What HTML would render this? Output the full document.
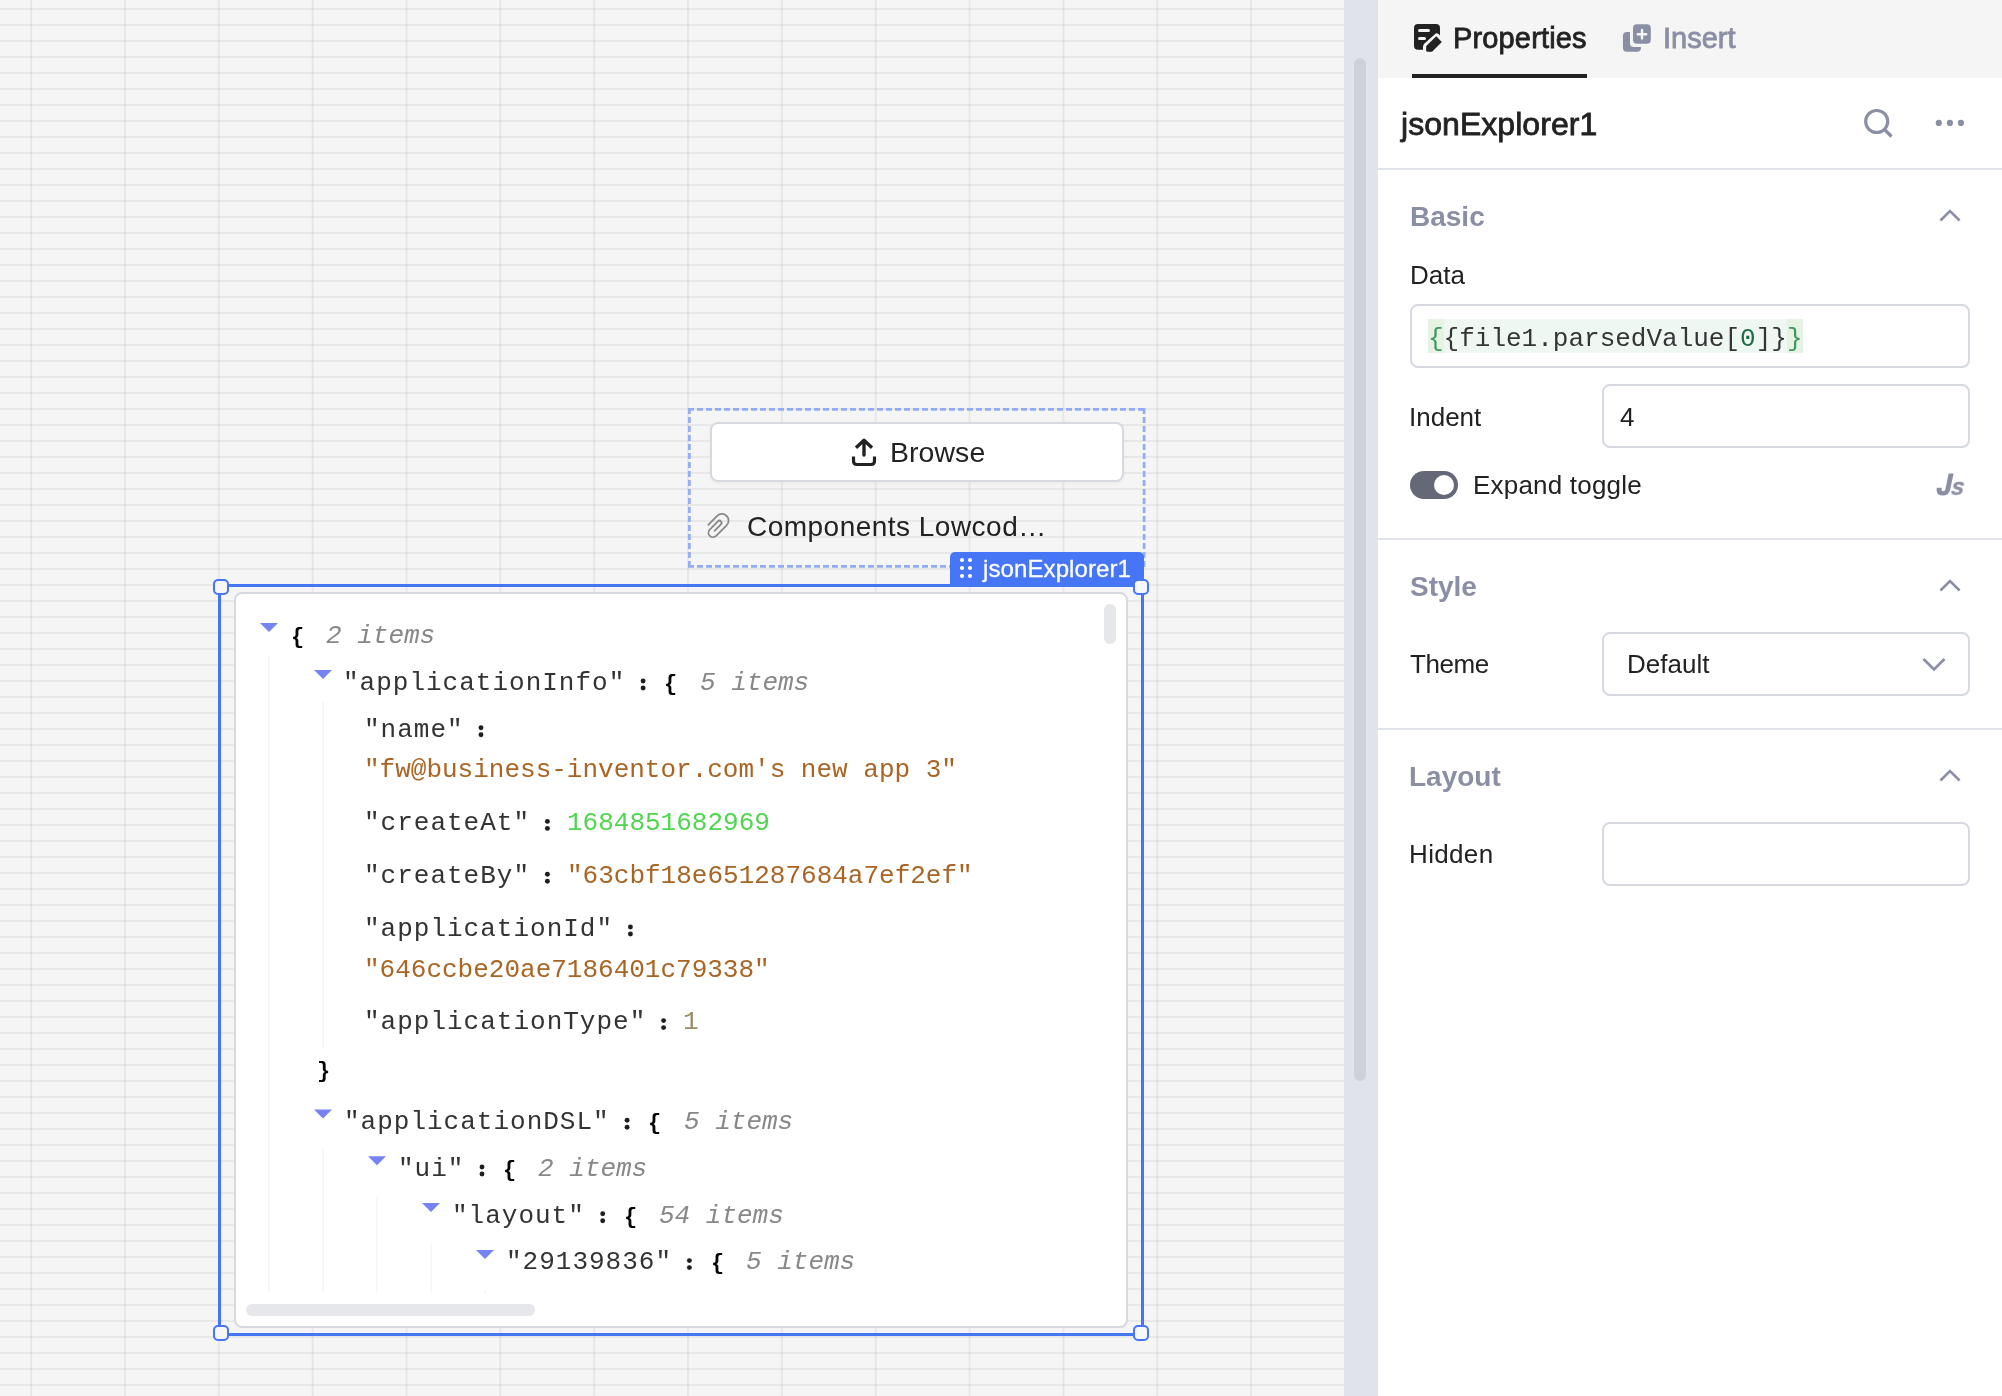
<!DOCTYPE html>
<html><head><meta charset="utf-8">
<style>
html,body{margin:0;padding:0;}
body{width:2002px;height:1396px;overflow:hidden;position:relative;background:#f5f5f5;font-family:'Liberation Sans', sans-serif;}
.b{position:absolute;}
.t{position:absolute;white-space:pre;line-height:1;will-change:transform;}
.ov{position:absolute;left:0;top:0;pointer-events:none;}
#grid{background-color:#f5f5f5;
 background-image:linear-gradient(to bottom, transparent 8px, rgba(0,0,0,0.055) 8px, rgba(0,0,0,0.055) 10px, transparent 10px),
 linear-gradient(to right, transparent 30px, rgba(0,0,0,0.06) 30px, rgba(0,0,0,0.06) 32px, transparent 32px);
 background-size:100% 16px, 93.846px 100%;
 background-position:0 0, 0.2px 0;}
</style></head><body>
<div class="b" id="grid" style="left:0;top:0;width:1344px;height:1396px;"></div>
<div class="b" style="left:1344px;top:0px;width:34px;height:1396px;background:#e1e3ea;"></div>
<div class="b" style="left:1354px;top:58px;width:12px;height:1023px;background:#ced1d9;border-radius:6px;"></div>
<div class="b" style="left:1378px;top:0px;width:624px;height:1396px;background:#fff;"></div>
<div class="b" style="left:1378px;top:0px;width:624px;height:78px;background:#f5f5f5;"></div>
<div class="b" style="left:1412px;top:74px;width:175px;height:4px;background:#222;"></div>
<div class="b" style="left:1378px;top:168px;width:624px;height:2px;background:#e1e3eb;"></div>
<div class="b" style="left:1378px;top:538px;width:624px;height:2px;background:#e1e3eb;"></div>
<div class="b" style="left:1378px;top:728px;width:624px;height:2px;background:#e1e3eb;"></div>
<div class="b" style="left:1410px;top:304px;width:560px;height:64px;border:2px solid #d7d9e0;border-radius:8px;box-sizing:border-box;background:#fff;"></div>
<div class="b" style="left:1428px;top:319px;width:375px;height:34px;background:#eff7f3;"></div>
<div class="b" style="left:1428px;top:319px;width:15.599999999999909px;height:34px;background:#e6f2e3;"></div>
<div class="b" style="left:1787.4px;top:319px;width:15.599999999999909px;height:34px;background:#e6f2e3;"></div>
<div class="b" style="left:1602px;top:384px;width:368px;height:64px;border:2px solid #d7d9e0;border-radius:8px;box-sizing:border-box;background:#fff;"></div>
<div class="b" style="left:1602px;top:632px;width:368px;height:64px;border:2px solid #d7d9e0;border-radius:8px;box-sizing:border-box;background:#fff;"></div>
<div class="b" style="left:1602px;top:822px;width:368px;height:64px;border:2px solid #d7d9e0;border-radius:8px;box-sizing:border-box;background:#fff;"></div>
<div class="b" style="left:1410px;top:471px;width:48px;height:28px;background:#646877;border-radius:14px;"></div>
<div class="b" style="left:1434px;top:475px;width:20px;height:20px;background:#fff;border-radius:10px;"></div>
<svg class="ov" width="2002" height="1396"><g stroke="#93adf4" stroke-width="2.75" stroke-dasharray="6 3" fill="none"><path d="M688,409.4 H1145.5"/><path d="M688,566.4 H1145.5"/><path d="M689.4,408 V567.8"/><path d="M1144.1,408 V567.8"/></g></svg>
<div class="b" style="left:710px;top:422px;width:414px;height:60px;border:2px solid #d7d9e0;border-radius:8px;box-sizing:border-box;background:#fff;box-shadow:0 2px 4px rgba(0,0,0,0.035);"></div>
<div class="b" style="left:234px;top:592px;width:894px;height:736px;border:2px solid #d7d9e0;border-radius:8px;box-sizing:border-box;background:#fff;"></div>
<div class="b" style="left:1104px;top:604px;width:12px;height:40px;background:#e6e7eb;border-radius:6px;"></div>
<div class="b" style="left:246px;top:1304px;width:289px;height:12px;background:#e6e7eb;border-radius:6px;"></div>
<div class="b" style="left:268px;top:655px;width:2px;height:638px;background:#f4f9f5;"></div>
<div class="b" style="left:322px;top:702px;width:2px;height:346px;background:#f4f9f5;"></div>
<div class="b" style="left:322px;top:1149px;width:2px;height:144px;background:#f4f9f5;"></div>
<div class="b" style="left:376px;top:1196px;width:2px;height:97px;background:#f4f9f5;"></div>
<div class="b" style="left:430px;top:1243px;width:2px;height:50px;background:#f4f9f5;"></div>
<div class="b" style="left:484px;top:1290px;width:2px;height:3px;background:#f4f9f5;"></div>
<div class="b" style="left:218px;top:584px;width:3px;height:752px;background:#4676f5;"></div>
<div class="b" style="left:1141px;top:584px;width:3px;height:752px;background:#4676f5;"></div>
<div class="b" style="left:219px;top:584px;width:925px;height:3px;background:#4676f5;"></div>
<div class="b" style="left:219px;top:1333px;width:925px;height:3px;background:#4676f5;"></div>
<div class="b" style="left:950px;top:552px;width:194px;height:35px;background:#4676f5;border-radius:5px 5px 0 0;"></div>
<div class="b" style="left:213px;top:579px;width:16px;height:16px;background:#f7f7f7;border:2.5px solid #4676f5;border-radius:5px;box-sizing:border-box;"></div>
<div class="b" style="left:1133px;top:579px;width:16px;height:16px;background:#f7f7f7;border:2.5px solid #4676f5;border-radius:5px;box-sizing:border-box;"></div>
<div class="b" style="left:213px;top:1325px;width:16px;height:16px;background:#f7f7f7;border:2.5px solid #4676f5;border-radius:5px;box-sizing:border-box;"></div>
<div class="b" style="left:1133px;top:1325px;width:16px;height:16px;background:#f7f7f7;border:2.5px solid #4676f5;border-radius:5px;box-sizing:border-box;"></div>
<svg class="ov" width="2002" height="1396" viewBox="0 0 2002 1396"><path d="M1418,24 H1436 Q1440,24 1440,28 V35.6 Q1438.2,33 1436,33.2 L1424.2,43.8 Q1423,45 1423,47.3 V49.8 H1418 Q1414,49.8 1414,45.8 V28 Q1414,24 1418,24 Z" fill="#222"/><rect x="1418" y="29" width="12" height="3" rx="1.5" fill="#f5f5f5"/><rect x="1418" y="37" width="8" height="3" rx="1.5" fill="#f5f5f5"/><path d="M1436.3,36.3 L1441.8,42.1 L1432.1,51.8 H1427.6 Q1426.2,51.8 1426.2,50.4 V46 Z" fill="#222"/><rect x="1633" y="24.2" width="17.8" height="19.5" rx="4" fill="#8b8fa3"/><path d="M1642,30 V38.4 M1637.8,34.2 H1646.2" stroke="#f5f5f5" stroke-width="2.4" stroke-linecap="round"/><path d="M1630,31.9 H1627 Q1622.9,31.9 1622.9,36 V47.7 Q1622.9,51.8 1627,51.8 H1637 Q1641,51.8 1641,47.7 V46.9 H1634 Q1630,46.9 1630,42.9 Z" fill="#8b8fa3"/><circle cx="1876.7" cy="121.5" r="11" fill="none" stroke="#8b8fa3" stroke-width="3.2"/><path d="M1884.5,129.5 L1891.5,136.5" stroke="#8b8fa3" stroke-width="3.2" stroke-linecap="butt"/><circle cx="1938.8" cy="122.9" r="3.1" fill="#8b8fa3"/><circle cx="1949.9" cy="122.9" r="3.1" fill="#8b8fa3"/><circle cx="1960.9" cy="122.9" r="3.1" fill="#8b8fa3"/><path d="M1940.4,220.5 L1950,211 L1959.6,220.5" fill="none" stroke="#8b8fa3" stroke-width="2.6"/><path d="M1940.4,590.5 L1950,581 L1959.6,590.5" fill="none" stroke="#8b8fa3" stroke-width="2.6"/><path d="M1940.4,780.5 L1950,771 L1959.6,780.5" fill="none" stroke="#8b8fa3" stroke-width="2.6"/><path d="M1923.5,659 L1934,669.5 L1944.5,659" fill="none" stroke="#8b8fa3" stroke-width="2.6"/><path d="M1948.6,473.5 H1953.6 L1950.2,489.5 Q1948.9,495.6 1942.8,495.6 Q1936.4,495.6 1936.6,489.4 L1936.8,487.8 H1941.6 L1941.5,489 Q1941.4,491.3 1943.3,491.3 Q1945,491.3 1945.5,489 Z" fill="#8b8fa3"/><path d="M856,447.8 L864,440.3 L872,447.8" fill="none" stroke="#222" stroke-width="3.3" stroke-linejoin="round"/><path d="M864,442 V455" fill="none" stroke="#222" stroke-width="3.4" stroke-linecap="round"/><path d="M853.5,456.5 V461 Q853.5,464.5 857,464.5 H871 Q874.5,464.5 874.5,461 V456.5" fill="none" stroke="#222" stroke-width="3.2"/><path d="M708.3,524.8 L717.16,515.86 A6.7,6.7 0 0 1 726.64,525.34 L716.08,535.88 A4.5,4.5 0 0 1 709.72,529.52 L717.89,521.29 A2.13,2.13 0 0 1 720.91,524.31 L714.6,530.8" fill="none" stroke="#888" stroke-width="1.8" stroke-linecap="round"/><circle cx="962" cy="560" r="2.1" fill="#fff"/><circle cx="962" cy="568" r="2.1" fill="#fff"/><circle cx="962" cy="576" r="2.1" fill="#fff"/><circle cx="970" cy="560" r="2.1" fill="#fff"/><circle cx="970" cy="568" r="2.1" fill="#fff"/><circle cx="970" cy="576" r="2.1" fill="#fff"/><path d="M260,623 H278 L269,632 Z" fill="#7782f3"/><path d="M314,670 H332 L323,679 Z" fill="#7782f3"/><path d="M314,1109.5 H332 L323,1118.5 Z" fill="#7782f3"/><path d="M368,1156.3 H386 L377,1165.3 Z" fill="#7782f3"/><path d="M422,1203 H440 L431,1212 Z" fill="#7782f3"/><path d="M476,1250 H494 L485,1259 Z" fill="#7782f3"/></svg>
<div class="t" style="left:1452.80px;top:24.00px;font-family:'Liberation Sans', sans-serif;font-size:29px;color:#222;font-weight:normal;font-style:normal;letter-spacing:0.15px;-webkit-text-stroke:0.8px currentColor;">Properties</div>
<div class="t" style="left:1662.63px;top:24.00px;font-family:'Liberation Sans', sans-serif;font-size:29px;color:#8b8fa3;font-weight:normal;font-style:normal;letter-spacing:0.0px;-webkit-text-stroke:0.8px currentColor;">Insert</div>
<div class="t" style="left:1401.40px;top:108.00px;font-family:'Liberation Sans', sans-serif;font-size:32px;color:#222;font-weight:normal;font-style:normal;letter-spacing:0.05px;-webkit-text-stroke:0.8px currentColor;">jsonExplorer1</div>
<div class="t" style="left:1409.93px;top:203.00px;font-family:'Liberation Sans', sans-serif;font-size:28px;color:#8b8fa3;font-weight:bold;font-style:normal;letter-spacing:0px;">Basic</div>
<div class="t" style="left:1409.67px;top:262.00px;font-family:'Liberation Sans', sans-serif;font-size:26px;color:#222;font-weight:normal;font-style:normal;letter-spacing:0px;">Data</div>
<div class="t" style="left:1428.00px;top:326.00px;font-family:'Liberation Mono', monospace;font-size:26px;color:#353535;font-weight:normal;font-style:normal;letter-spacing:0px;"><span style="color:#3c9a5c">{</span>{file1.parsedValue[<span style="color:#1f6b45">0</span>]}<span style="color:#3c9a5c">}</span></div>
<div class="t" style="left:1408.60px;top:404.00px;font-family:'Liberation Sans', sans-serif;font-size:26px;color:#222;font-weight:normal;font-style:normal;letter-spacing:0px;">Indent</div>
<div class="t" style="left:1620.40px;top:404.00px;font-family:'Liberation Sans', sans-serif;font-size:26px;color:#222;font-weight:normal;font-style:normal;letter-spacing:0px;">4</div>
<div class="t" style="left:1473.17px;top:472.00px;font-family:'Liberation Sans', sans-serif;font-size:26px;color:#222;font-weight:normal;font-style:normal;letter-spacing:0.2px;">Expand toggle</div>
<div class="t" style="left:1950.30px;top:476.00px;font-family:'Liberation Sans', sans-serif;font-size:23px;color:#8b8fa3;font-weight:bold;font-style:italic;letter-spacing:0px;transform:skewX(-8deg);transform-origin:0 100%;-webkit-text-stroke:0.4px #8b8fa3;">s</div>
<div class="t" style="left:1409.89px;top:573.00px;font-family:'Liberation Sans', sans-serif;font-size:28px;color:#8b8fa3;font-weight:bold;font-style:normal;letter-spacing:0px;">Style</div>
<div class="t" style="left:1410.10px;top:651.00px;font-family:'Liberation Sans', sans-serif;font-size:26px;color:#222;font-weight:normal;font-style:normal;letter-spacing:-0.4px;">Theme</div>
<div class="t" style="left:1626.87px;top:651.00px;font-family:'Liberation Sans', sans-serif;font-size:26px;color:#222;font-weight:normal;font-style:normal;letter-spacing:0px;">Default</div>
<div class="t" style="left:1409.13px;top:763.00px;font-family:'Liberation Sans', sans-serif;font-size:28px;color:#8b8fa3;font-weight:bold;font-style:normal;letter-spacing:0px;">Layout</div>
<div class="t" style="left:1408.57px;top:841.00px;font-family:'Liberation Sans', sans-serif;font-size:26px;color:#222;font-weight:normal;font-style:normal;letter-spacing:0.35px;">Hidden</div>
<div class="t" style="left:890.00px;top:438.00px;font-family:'Liberation Sans', sans-serif;font-size:28.4px;color:#222;font-weight:normal;font-style:normal;letter-spacing:0.1px;">Browse</div>
<div class="t" style="left:747.33px;top:513.00px;font-family:'Liberation Sans', sans-serif;font-size:28px;color:#222;font-weight:normal;font-style:normal;letter-spacing:0.48px;">Components Lowcod…</div>
<div class="t" style="left:982.90px;top:557.00px;font-family:'Liberation Sans', sans-serif;font-size:24px;color:#fff;font-weight:normal;font-style:normal;letter-spacing:0.1px;-webkit-text-stroke:0.3px #fff;">jsonExplorer1</div>
<div class="t" style="left:290.62px;top:627.00px;font-family:'Liberation Mono', monospace;font-size:22px;color:#060606;font-weight:bold;font-style:normal;letter-spacing:0px;">{</div>
<div class="t" style="left:325.90px;top:623.00px;font-family:'Liberation Mono', monospace;font-size:26px;color:#888888;font-weight:normal;font-style:italic;letter-spacing:0px;">2 items</div>
<div class="t" style="left:343.48px;top:670.00px;font-family:'Liberation Mono', monospace;font-size:26px;color:#333333;font-weight:normal;font-style:normal;letter-spacing:1.0px;">"applicationInfo"</div>
<div class="t" style="left:664.27px;top:674.00px;font-family:'Liberation Mono', monospace;font-size:22px;color:#060606;font-weight:bold;font-style:normal;letter-spacing:0px;">{</div>
<div class="t" style="left:699.55px;top:670.00px;font-family:'Liberation Mono', monospace;font-size:26px;color:#888888;font-weight:normal;font-style:italic;letter-spacing:0px;">5 items</div>
<div class="t" style="left:363.98px;top:717.00px;font-family:'Liberation Mono', monospace;font-size:26px;color:#333333;font-weight:normal;font-style:normal;letter-spacing:1.0px;">"name"</div>
<div class="t" style="left:363.98px;top:757.00px;font-family:'Liberation Mono', monospace;font-size:26px;color:#aa6525;font-weight:normal;font-style:normal;letter-spacing:0px;">"fw@business-inventor.com's new app 3"</div>
<div class="t" style="left:363.98px;top:810.00px;font-family:'Liberation Mono', monospace;font-size:26px;color:#333333;font-weight:normal;font-style:normal;letter-spacing:1.0px;">"createAt"</div>
<div class="t" style="left:566.90px;top:810.00px;font-family:'Liberation Mono', monospace;font-size:26px;color:#4fd64f;font-weight:normal;font-style:normal;letter-spacing:0px;">1684851682969</div>
<div class="t" style="left:363.98px;top:863.00px;font-family:'Liberation Mono', monospace;font-size:26px;color:#333333;font-weight:normal;font-style:normal;letter-spacing:1.0px;">"createBy"</div>
<div class="t" style="left:566.90px;top:863.00px;font-family:'Liberation Mono', monospace;font-size:26px;color:#aa6525;font-weight:normal;font-style:normal;letter-spacing:0px;">"63cbf18e651287684a7ef2ef"</div>
<div class="t" style="left:363.98px;top:916.00px;font-family:'Liberation Mono', monospace;font-size:26px;color:#333333;font-weight:normal;font-style:normal;letter-spacing:1.0px;">"applicationId"</div>
<div class="t" style="left:363.98px;top:957.00px;font-family:'Liberation Mono', monospace;font-size:26px;color:#aa6525;font-weight:normal;font-style:normal;letter-spacing:0px;">"646ccbe20ae7186401c79338"</div>
<div class="t" style="left:363.98px;top:1009.00px;font-family:'Liberation Mono', monospace;font-size:26px;color:#333333;font-weight:normal;font-style:normal;letter-spacing:1.0px;">"applicationType"</div>
<div class="t" style="left:683.10px;top:1009.00px;font-family:'Liberation Mono', monospace;font-size:26px;color:#9d8b63;font-weight:normal;font-style:normal;letter-spacing:0px;">1</div>
<div class="t" style="left:316.77px;top:1061.00px;font-family:'Liberation Mono', monospace;font-size:22px;color:#060606;font-weight:bold;font-style:normal;letter-spacing:0px;">}</div>
<div class="t" style="left:344.08px;top:1109.00px;font-family:'Liberation Mono', monospace;font-size:26px;color:#333333;font-weight:normal;font-style:normal;letter-spacing:1.0px;">"applicationDSL"</div>
<div class="t" style="left:648.27px;top:1113.00px;font-family:'Liberation Mono', monospace;font-size:22px;color:#060606;font-weight:bold;font-style:normal;letter-spacing:0px;">{</div>
<div class="t" style="left:683.55px;top:1109.00px;font-family:'Liberation Mono', monospace;font-size:26px;color:#888888;font-weight:normal;font-style:italic;letter-spacing:0px;">5 items</div>
<div class="t" style="left:398.18px;top:1156.00px;font-family:'Liberation Mono', monospace;font-size:26px;color:#333333;font-weight:normal;font-style:normal;letter-spacing:1.0px;">"ui"</div>
<div class="t" style="left:503.17px;top:1160.00px;font-family:'Liberation Mono', monospace;font-size:22px;color:#060606;font-weight:bold;font-style:normal;letter-spacing:0px;">{</div>
<div class="t" style="left:538.45px;top:1156.00px;font-family:'Liberation Mono', monospace;font-size:26px;color:#888888;font-weight:normal;font-style:italic;letter-spacing:0px;">2 items</div>
<div class="t" style="left:452.48px;top:1203.00px;font-family:'Liberation Mono', monospace;font-size:26px;color:#333333;font-weight:normal;font-style:normal;letter-spacing:1.0px;">"layout"</div>
<div class="t" style="left:623.87px;top:1207.00px;font-family:'Liberation Mono', monospace;font-size:22px;color:#060606;font-weight:bold;font-style:normal;letter-spacing:0px;">{</div>
<div class="t" style="left:659.15px;top:1203.00px;font-family:'Liberation Mono', monospace;font-size:26px;color:#888888;font-weight:normal;font-style:italic;letter-spacing:0px;">54 items</div>
<div class="t" style="left:505.98px;top:1249.00px;font-family:'Liberation Mono', monospace;font-size:26px;color:#333333;font-weight:normal;font-style:normal;letter-spacing:1.0px;">"29139836"</div>
<div class="t" style="left:710.57px;top:1253.00px;font-family:'Liberation Mono', monospace;font-size:22px;color:#060606;font-weight:bold;font-style:normal;letter-spacing:0px;">{</div>
<div class="t" style="left:745.85px;top:1249.00px;font-family:'Liberation Mono', monospace;font-size:26px;color:#888888;font-weight:normal;font-style:italic;letter-spacing:0px;">5 items</div>
<svg class="ov" width="2002" height="1396"><circle cx="643.10" cy="681.00" r="2.45" fill="#1e1e1e"/><circle cx="643.10" cy="688.00" r="2.45" fill="#1e1e1e"/><circle cx="481.00" cy="727.80" r="2.45" fill="#1e1e1e"/><circle cx="481.00" cy="734.80" r="2.45" fill="#1e1e1e"/><circle cx="547.40" cy="821.40" r="2.45" fill="#1e1e1e"/><circle cx="547.40" cy="828.40" r="2.45" fill="#1e1e1e"/><circle cx="547.40" cy="874.20" r="2.45" fill="#1e1e1e"/><circle cx="547.40" cy="881.20" r="2.45" fill="#1e1e1e"/><circle cx="630.40" cy="927.00" r="2.45" fill="#1e1e1e"/><circle cx="630.40" cy="934.00" r="2.45" fill="#1e1e1e"/><circle cx="663.60" cy="1020.60" r="2.45" fill="#1e1e1e"/><circle cx="663.60" cy="1027.60" r="2.45" fill="#1e1e1e"/><circle cx="627.10" cy="1120.20" r="2.45" fill="#1e1e1e"/><circle cx="627.10" cy="1127.20" r="2.45" fill="#1e1e1e"/><circle cx="482.00" cy="1167.00" r="2.45" fill="#1e1e1e"/><circle cx="482.00" cy="1174.00" r="2.45" fill="#1e1e1e"/><circle cx="602.70" cy="1213.80" r="2.45" fill="#1e1e1e"/><circle cx="602.70" cy="1220.80" r="2.45" fill="#1e1e1e"/><circle cx="689.40" cy="1260.60" r="2.45" fill="#1e1e1e"/><circle cx="689.40" cy="1267.60" r="2.45" fill="#1e1e1e"/></svg>
</body></html>
